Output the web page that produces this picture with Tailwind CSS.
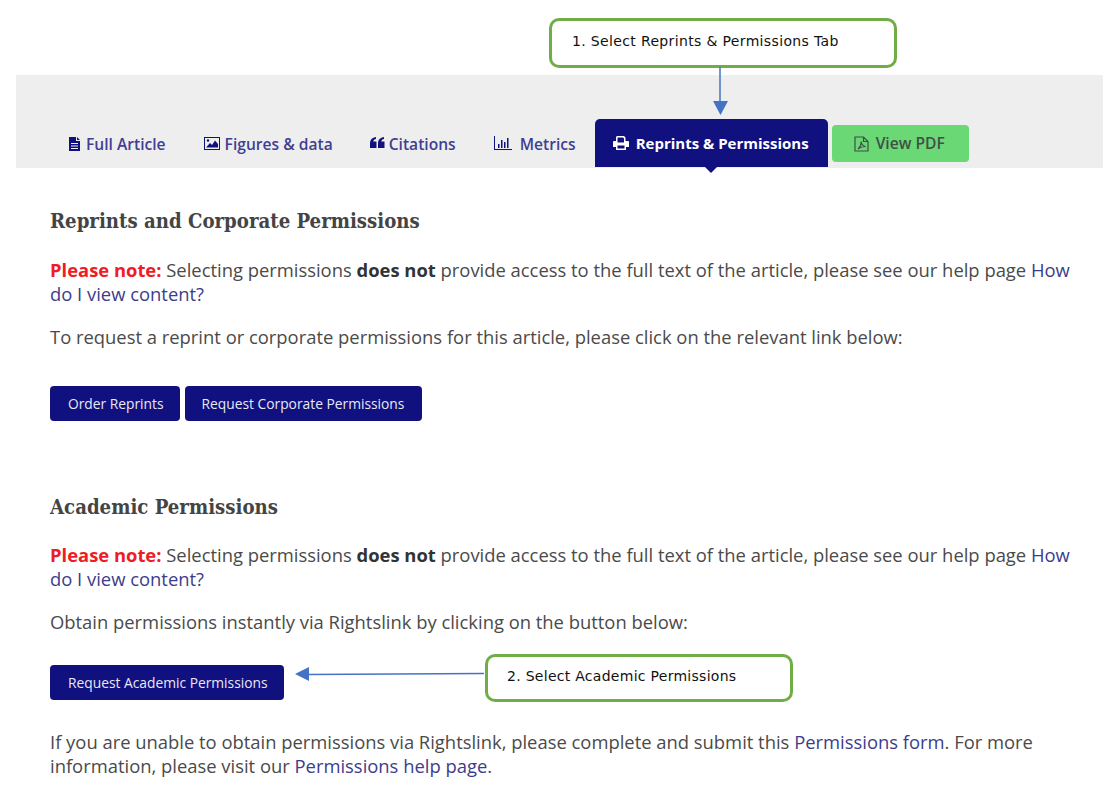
<!DOCTYPE html>
<html lang="en">
<head>
  <meta charset="UTF-8" />
  <title>Reprints &amp; Permissions</title>
  <script src="https://cdn.jsdelivr.net/npm/@tailwindcss/browser@4"></script>
</head>
<body class="bg-white relative w-[1119px] h-[796px] overflow-hidden font-['Open_Sans',sans-serif] text-[#4a4a4a]">

<!-- Callouts -->
<div class="absolute left-[549px] top-[18px] w-[348px] h-[50px] border-[3px] border-[#70ad47] rounded-[10px] bg-white pl-[20px] pt-[12px] font-['DejaVu_Sans',sans-serif] text-[14px] tracking-[0.35px] leading-[16px] text-[#111]">1. Select Reprints &amp; Permissions Tab</div>
<svg class="absolute left-[710px] top-[67px]" width="20" height="50" viewBox="0 0 20 50"><path d="M10 0V38" stroke="#4472c4" stroke-width="1.5"/><path d="M3 34H18L10.500 48Z" fill="#4472c4"/></svg>
<div class="absolute left-[485px] top-[654px] w-[308px] h-[48px] border-[3px] border-[#70ad47] rounded-[10px] bg-white pl-[19px] pt-[11px] font-['DejaVu_Sans',sans-serif] text-[14px] tracking-[0.28px] leading-[16px] text-[#111]">2. Select Academic Permissions</div>
<svg class="absolute left-[294px] top-[664px]" width="191" height="20" viewBox="0 0 191 20"><path d="M12 10.5L190 9.5" stroke="#4472c4" stroke-width="1.5"/><path d="M1 10L15 3V17Z" fill="#4472c4"/></svg>

<!-- Tab bar -->
<div class="mt-[75px] mx-[16px] h-[93px] bg-[#eeeeee] flex items-end pb-[1px] pl-[36px] text-[15.600px] font-semibold text-[#3f3f94]">
  <a class="flex items-center gap-[4px] h-[48px] px-[16px]">
    <svg width="14" height="15" viewBox="0 0 12 15" fill="#10107f"><path d="M0 1H7V5H11V15H0ZM8 1L11 4H8ZM2 7V8H9V7ZM2 9.500V10.500H9V9.500ZM2 12V13H9V12Z" fill-rule="evenodd"/></svg>
    <span class="pt-[4px]">Full Article</span>
  </a>
  <a class="flex items-center gap-[5px] h-[48px] px-[22px]">
    <svg width="16" height="13" viewBox="0 0 16 13"><rect x=".5" y=".5" width="15" height="12" fill="none" stroke="#10107f"/><path d="M2 10.500L6 6L8 8L11 3.500L14 7V10.500Z" fill="#10107f"/><circle cx="4" cy="3.500" r="1.200" fill="#10107f"/></svg>
    <span class="pt-[4px]">Figures &amp; data</span>
  </a>
  <a class="flex items-center gap-[4px] h-[48px] px-[15px]">
    <svg width="15" height="12" viewBox="0 0 15 12" fill="#10107f"><path d="M0 6C0 2.500 2 .5 6 0V2C4.500 2.300 3.500 3 3.300 4.500H6.500V11H0ZM8 6C8 2.500 10 .5 14 0V2C12.500 2.300 11.500 3 11.300 4.500H14.500V11H8Z"/></svg>
    <span class="pt-[4px]">Citations</span>
  </a>
  <a class="flex items-center gap-[8px] h-[48px] pl-[23px] pr-[19px]">
    <svg width="18" height="14" viewBox="0 0 18 14" fill="#10107f"><path d="M0 0H1V13H18V14H0ZM4 8H5.500V12H4ZM7 4H8.500V12H7ZM10 6H11.500V12H10ZM13 2H14.500V12H13Z"/></svg>
    <span class="pt-[4px]">Metrics</span>
  </a>
  <div class="relative">
    <a class="flex items-center gap-[7px] w-[233px] h-[48px] pl-[18px] bg-[#10107f] rounded-t-[5px] text-white text-[15px] font-bold">
      <svg width="16" height="14" viewBox="0 0 16 14" fill="#ffffff"><path d="M4 0H11L12.500 1.500V5H15.500L16 6V11H13V14H3V11H0V6L.5 5H3V1ZM4.500 1.500V6.500H11V2.500L10 1.500ZM4.500 9.500V12.500H11.500V9.500Z" fill-rule="evenodd"/></svg>
      Reprints &amp; Permissions
    </a>
    <div class="absolute left-[110px] top-[48px] w-0 h-0 border-x-[6px] border-x-transparent border-t-[6px] border-t-[#10107f]"></div>
  </div>
  <a class="flex items-center gap-[7px] ml-[4px] mb-[5px] w-[137px] h-[37px] pl-[22px] bg-[#6bd876] rounded-[4px] text-[#3f4f47]">
    <svg width="15" height="16" viewBox="0 0 15 16" fill="none" stroke="#3f4f47" stroke-width="1.200"><path d="M1 1H9.500L14 5.500V15H1ZM9.500 1V5.500H14M4 13C6 11 7.500 8 7 5.500C7.500 8 9 10 11.500 10.500C9 10.500 6.500 11 4 13Z"/></svg>
    <span class="pt-[1px]">View PDF</span>
  </a>
</div>

<!-- Content -->
<main class="pl-[50px] pr-[30px] text-[18.400px] leading-[24px]">
  <h2 class="mt-[40px] font-['DejaVu_Serif_Condensed','DejaVu_Serif',serif] font-bold text-[20.200px] leading-[26px] text-[#444]">Reprints and Corporate Permissions</h2>
  <p class="mt-[24px]"><b class="text-[#ee1c25]">Please note:</b> Selecting permissions <b class="text-[#333]">does not</b> provide access to the full text of the article, please see our help page <a class="text-[#3c3c8c]">How do I view content?</a></p>
  <p class="mt-[19px]">To request a reprint or corporate permissions for this article, please click on the relevant link below:</p>
  <div class="mt-[37px] flex gap-[5px] text-[13.800px] text-[#e8e8f4]">
    <a class="h-[35px] pl-[18px] pr-[16px] flex items-center bg-[#10107f] rounded-[4px]">Order Reprints</a>
    <a class="h-[35px] pl-[17px] pr-[18px] flex items-center bg-[#10107f] rounded-[4px]">Request Corporate Permissions</a>
  </div>
  <h2 class="mt-[73px] font-['DejaVu_Serif_Condensed','DejaVu_Serif',serif] font-bold text-[20.200px] leading-[26px] text-[#444]">Academic Permissions</h2>
  <p class="mt-[23px]"><b class="text-[#ee1c25]">Please note:</b> Selecting permissions <b class="text-[#333]">does not</b> provide access to the full text of the article, please see our help page <a class="text-[#3c3c8c]">How do I view content?</a></p>
  <p class="mt-[19px]">Obtain permissions instantly via Rightslink by clicking on the button below:</p>
  <div class="mt-[31px] flex text-[13.800px] text-[#e8e8f4]">
    <a class="h-[35px] pl-[18px] pr-[16px] flex items-center bg-[#10107f] rounded-[4px]">Request Academic Permissions</a>
  </div>
  <p class="mt-[30px]">If you are unable to obtain permissions via Rightslink, please complete and submit this <a class="text-[#3c3c8c]">Permissions form</a>. For more information, please visit our <a class="text-[#3c3c8c]">Permissions help page</a>.</p>
</main>

</body>
</html>
